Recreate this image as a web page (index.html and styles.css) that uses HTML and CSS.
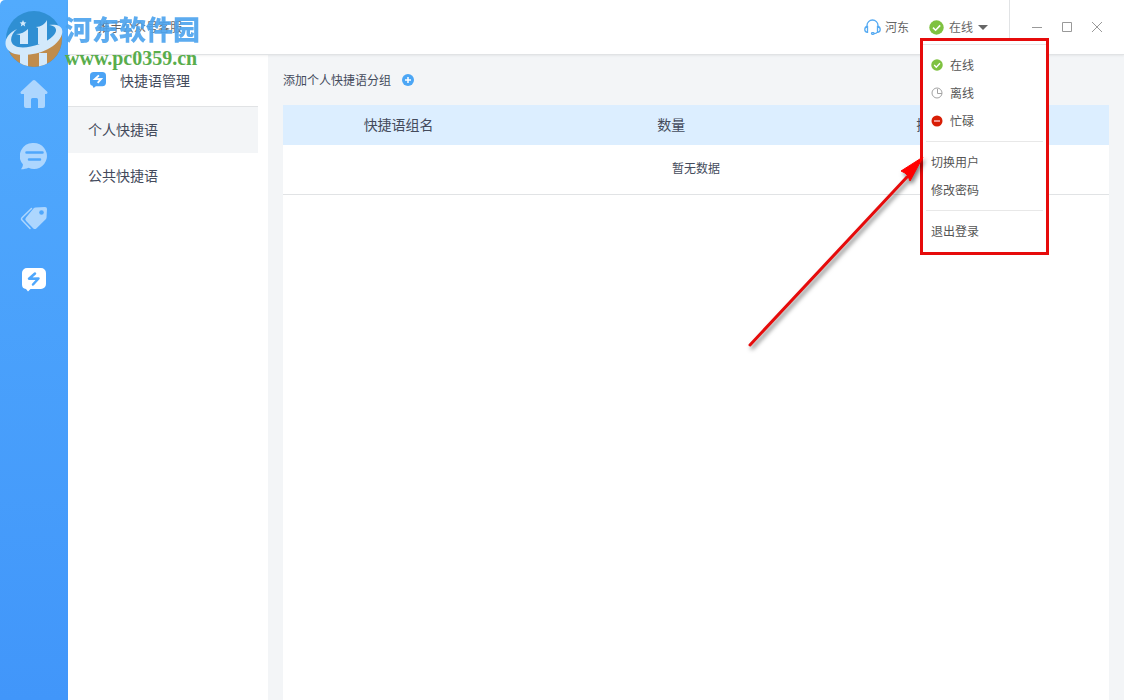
FILE: index.html
```html
<!DOCTYPE html>
<html lang="zh-CN">
<head>
    <meta charset="utf-8">
    <title>快捷语管理</title>
    <meta name="viewport" content="width=device-width, initial-scale=1">
    <link rel="stylesheet" href="styles.css">
</head>
<body>
    <div class="app">
        <nav class="sidebar">
            <a href="#" class="side-link" aria-label="首页">
                <svg width="28" height="30" viewBox="0 0 28 30"><path d="M12.7 1.6a2 2 0 0 1 2.6 0L27 12.6c1 1 .5 2.4-.8 2.4H25v12a2 2 0 0 1-2 2h-5v-8.500a1.500 1.500 0 0 0-1.500-1.500h-4a1.500 1.500 0 0 0-1.500 1.500V29H6a2 2 0 0 1-2-2V15H1.800C.5 15 0 13.600 1 12.600z"/></svg>
            </a>
            <a href="#" class="side-link" aria-label="会话">
                <svg width="28" height="28" viewBox="0 0 28 28"><path d="M14 1a13 13 0 1 1-5.500 24.800C6 26.800 3.500 27.400 1 27.300c1.200-1.500 1.900-3 1.900-5A13 13 0 0 1 14 1z"/><path class="side-line" d="M6.500 10.500h16M9 17.500h11"/></svg>
            </a>
            <a href="#" class="side-link" aria-label="标签">
                <svg width="28" height="24" viewBox="0 0 28 24"><path d="M15.500 1.500 25 1a2 2 0 0 1 2 2l-.5 8.500a3 3 0 0 1-.8 1.800L16.600 22.200a2.500 2.500 0 0 1-3.500 0l-7-7.300a2.500 2.500 0 0 1 0-3.500l7.600-9.100a3 3 0 0 1 1.800-.8z"/><circle class="side-hole" cx="21.500" cy="6.500" r="2.300"/><path class="side-edge" d="M11.500 2.500 2 11.800a1.500 1.500 0 0 0 0 2.200l8 8.500"/></svg>
            </a>
            <a href="#" class="side-link active" aria-label="快捷语">
                <svg width="26" height="26" viewBox="0 0 26 26"><path d="M6 1h14a5 5 0 0 1 5 5v11a5 5 0 0 1-5 5H9.500L7 24.600 5 22a4.500 4.500 0 0 1-4-4.500V6a5 5 0 0 1 5-5z"/><path class="side-bolt" d="m14 6.500-6 5.200 9.500-.2L12 17.500"/></svg>
            </a>
        </nav>

        <div class="body">
            <header class="header">
                <h1 class="title">推手公众号客服</h1>
                <div class="user">
                    <svg width="17" height="16" viewBox="0 0 17 16" fill="none" stroke="#55aaf2" stroke-width="1.300"><path d="M3 8V6.500a5.500 5.500 0 0 1 11 0V8"/><path d="M3.500 7.500v5.800C1.800 13.300.8 12 .8 10.500s1-2.800 2.700-3zM13.500 7.500v5.800c1.700 0 2.700-1.300 2.700-2.800s-1-2.800-2.700-3zM13.500 13c-.8 1.300-2 1.700-3.500 1.700"/><rect x="7.500" y="13.700" width="2.500" height="1.600" rx=".8"/></svg>
                    <span>河东</span>
                </div>
                <div class="status">
                    <button type="button" class="status-btn">
                        <svg width="15" height="15" viewBox="0 0 15 15"><circle cx="7.500" cy="7.500" r="7.200" fill="#7fc241"/><path d="m4 7.600 2.600 2.600 4.600-4.800" fill="none" stroke="#fff" stroke-width="1.600"/></svg>
                        <span>在线</span>
                        <i class="caret"></i>
                    </button>
                    <div class="menu">
                        <button type="button" class="menu-item">
                            <svg width="12" height="12" viewBox="0 0 15 15"><circle cx="7.500" cy="7.500" r="7.200" fill="#7fc241"/><path d="m4 7.600 2.600 2.600 4.600-4.800" fill="none" stroke="#fff" stroke-width="1.700"/></svg>在线
                        </button>
                        <button type="button" class="menu-item">
                            <svg width="12" height="12" viewBox="0 0 12 12" fill="none" stroke="#a3a3a3"><circle cx="6" cy="6" r="5"/><path d="M6.500 2v4.500H11"/></svg>离线
                        </button>
                        <button type="button" class="menu-item">
                            <svg width="12" height="12" viewBox="0 0 12 12"><circle cx="6" cy="6" r="5.500" fill="#d81e06"/><path d="M3 6h6" stroke="#fbb" stroke-width="1.500"/></svg>忙碌
                        </button>
                        <hr class="menu-line">
                        <button type="button" class="menu-item">切换用户</button>
                        <button type="button" class="menu-item">修改密码</button>
                        <hr class="menu-line">
                        <button type="button" class="menu-item">退出登录</button>
                    </div>
                </div>
                <div class="window-btns">
                    <button type="button" aria-label="最小化"><svg width="12" height="12"><path d="M1 6.500h10"/></svg></button>
                    <button type="button" aria-label="最大化"><svg width="12" height="12"><path d="M1.500 1.500h9v9h-9z"/></svg></button>
                    <button type="button" aria-label="关闭"><svg width="12" height="12"><path d="m1 1 10 10M11 1 1 11"/></svg></button>
                </div>
            </header>

            <div class="columns">
                <aside class="panel">
                    <h2 class="panel-title">
                        <svg width="16" height="16" viewBox="0 0 26 26"><path fill="#4ba3f5" d="M6 0h14a6 6 0 0 1 6 6v11a6 6 0 0 1-6 6H9.500L6 26l-2-3.500a5 5 0 0 1-4-5V6a6 6 0 0 1 6-6z"/><path d="m14.500 5.500-6.500 6 10-.2-5.500 6.200" fill="none" stroke="#fff" stroke-width="3"/></svg>
                        快捷语管理
                    </h2>
                    <a href="#" class="panel-link active">个人快捷语</a>
                    <a href="#" class="panel-link">公共快捷语</a>
                </aside>

                <main class="main">
                    <div class="toolbar">
                        <span>添加个人快捷语分组</span>
                        <button type="button" class="add-btn" aria-label="添加个人快捷语分组">
                            <svg width="12" height="12" viewBox="0 0 12 12"><circle cx="6" cy="6" r="6" fill="#4ba6f5"/><path d="M6 3v6M3 6h6" stroke="#fff" stroke-width="1.500"/></svg>
                        </button>
                    </div>
                    <div class="card">
                        <table class="table">
                            <thead>
                                <tr>
                                    <th class="col-name">快捷语组名</th>
                                    <th class="col-count">数量</th>
                                    <th class="col-action">操作</th>
                                </tr>
                            </thead>
                            <tbody>
                                <tr><td colspan="3">暂无数据</td></tr>
                            </tbody>
                        </table>
                    </div>
                </main>
            </div>
        </div>
    </div>

    <!-- 水印 -->
    <div class="mark">
        <svg class="mark-logo" width="60" height="60" viewBox="0 0 60 60">
            <defs><clipPath id="disc"><circle cx="29" cy="29" r="28"/></clipPath></defs>
            <g clip-path="url(#disc)">
                <path fill="#2f8fd3" d="M0 0h60v60H0z"/>
                <path fill="#c08c4c" d="M0 40C20 50 45 42 58 22v38H0z"/>
                <path fill="#d3e9fb" d="M11 24c5 0 9-2 12-5v15h-8V25zM31 17c5 0 9-3 11-7v24h-9V18zM15 44h8v16h-8zM34 43h8v17h-8z"/>
            </g>
            <path fill="#d3e9fb" d="M12 19C-3 26-3 40 10 44c17 4 43-5 47-20 2-8-5-10-13-9 8 1 9 6 4 11-8 8-25 13-35 11-9-2-9-11-1-18z"/>
            <path fill="#d3e9fb" d="m18 10 1 2.200 2.400.2-1.800 1.600.6 2.400-2.200-1.300-2.200 1.300.6-2.400-1.800-1.600 2.400-.2z"/>
        </svg>
        <div class="mark-text">
            <div class="mark-name">河东软件园</div>
            <div class="mark-url">www.pc0359.cn</div>
        </div>
    </div>

    <!-- 标注箭头 -->
    <svg class="arrow" width="190" height="210" viewBox="0 0 190 210">
        <path d="M10 195 167 27" stroke="#e60b0b" stroke-width="3" stroke-linecap="round"/>
        <path d="m183 7-22 14 4 2 3 3 2 5z" fill="#f00" stroke="#f00"/>
    </svg>
</body>
</html>
```

FILE: styles.css
```css
* {
 box-sizing: border-box; }
body {
 margin: 0;
 color: #444b5c;
 background: #fff;
 font: 14px/20px "Noto Sans CJK SC", sans-serif; }
a {
 color: inherit;
 text-decoration: none; }
button {
 padding: 0;
 border: 0;
 background: none;
 color: inherit;
 font: inherit;
 cursor: pointer; }
svg {
 display: block;
 flex: none; }
.app {
 display: flex;
 min-height: 100vh; }

.sidebar {
 display: flex;
 flex: none;
 flex-direction: column;
 width: 68px;
 padding-top: 63px;
 border-top-left-radius: 5px;
 background: linear-gradient(#52abfd, #4196fa); }
.side-link {
 display: flex;
 align-items: center;
 justify-content: center;
 height: 62px;
 fill: #add6fe; }
.side-link.active {
 fill: #fff; }
.side-line,
.side-edge,
.side-bolt {
 fill: none;
 stroke: #4fa7fc;
 stroke-width: 2.5;
 stroke-linecap: round;
 stroke-linejoin: round; }
.side-edge {
 stroke: #add6fe;
 stroke-width: 1.5; }
.side-hole {
 fill: #4fa7fc; }

.body {
 display: flex;
 flex: 1;
 flex-direction: column;
 min-width: 0; }
.header {
 position: relative;
 z-index: 2;
 display: flex;
 align-items: center;
 height: 55px;
 border-bottom: 1px solid #e1e3e5;
 background: #fff;
 box-shadow: 0 1px 2px rgba(0, 0, 0, .06);
 color: #666;
 font-size: 12px; }
.title {
 flex: 1;
 margin: 0;
 padding-left: 30px;
 font-size: 12px;
 font-weight: 400; }
.user {
 display: flex;
 align-items: center;
 gap: 4px;
 margin-right: 20px; }
.status {
 position: relative;
 margin-right: 21px; }
.status-btn {
 display: flex;
 align-items: center;
 gap: 5px; }
.caret {
 border: 5px solid transparent;
 border-top-color: #666;
 border-bottom: 0; }
.menu {
 position: absolute;
 top: 21px;
 left: -9px;
 width: 129px;
 height: 217px;
 padding: 10px 3px;
 border: 3px solid #e60b0b;
 background: linear-gradient(#e8e8e8, #e8e8e8) 0 3px / 100% 1px no-repeat #fff; }
.menu-item {
 display: flex;
 align-items: center;
 gap: 7px;
 width: 100%;
 height: 28px;
 padding-left: 5px;
 color: #555; }
.menu-line {
 height: 1px;
 margin: 6px 0;
 border: 0;
 background: #e8e8e8; }
.window-btns {
 display: flex;
 align-self: flex-start;
 height: 44px;
 padding: 10px 12px 0;
 border-left: 1px solid #e1e3e5; }
.window-btns button {
 display: flex;
 align-items: center;
 justify-content: center;
 width: 30px;
 fill: none;
 stroke: #999; }

.columns {
 display: flex;
 flex: 1;
 background: #f3f5f7; }
.panel {
 flex: none;
 width: 200px;
 padding-right: 10px;
 background: #fff; }
.panel-title {
 display: flex;
 align-items: center;
 gap: 14px;
 height: 52px;
 margin: 0;
 padding: 0 0 2px 22px;
 border-bottom: 1px solid #e1e3e5;
 font-size: 14px;
 font-weight: 400; }
.panel-link {
 display: block;
 height: 46px;
 padding-left: 20px;
 line-height: 44px; }
.panel-link.active {
 background: #f3f5f7; }

.main {
 display: flex;
 flex: 1;
 flex-direction: column;
 padding: 0 15px; }
.toolbar {
 display: flex;
 align-items: center;
 gap: 11px;
 height: 50px;
 font-size: 12px; }
.card {
 flex: 1;
 background: #fff; }
.table {
 width: 100%;
 border-collapse: collapse;
 table-layout: fixed; }
.table th {
 height: 40px;
 padding: 0 0 2px;
 background: #dceeff;
 font-weight: 400; }
.table td {
 height: 49px;
 padding: 0 0 2px;
 border-bottom: 1px solid #e1e3e5;
 font-size: 12px;
 text-align: center; }
.table .col-name {
 width: 28%; }
.table .col-count {
 width: 38%; }
.table .col-action {
 padding-left: 88px;
 text-align: left; }

.mark {
 position: absolute;
 z-index: 3;
 top: 10px;
 left: 5px;
 display: flex;
 pointer-events: none; }
.mark-name {
 color: #4ba3ee;
 font-size: 27px;
 font-weight: 900;
 line-height: 38px;
 opacity: .9; }
.mark-url {
 color: #59ad4c;
 font: bold 20px/20px "Liberation Serif", serif; }
.arrow {
 position: absolute;
 z-index: 3;
 top: 150px;
 left: 740px;
 filter: drop-shadow(2px 3px 2px rgba(0, 0, 0, .5));
 pointer-events: none; }
```
